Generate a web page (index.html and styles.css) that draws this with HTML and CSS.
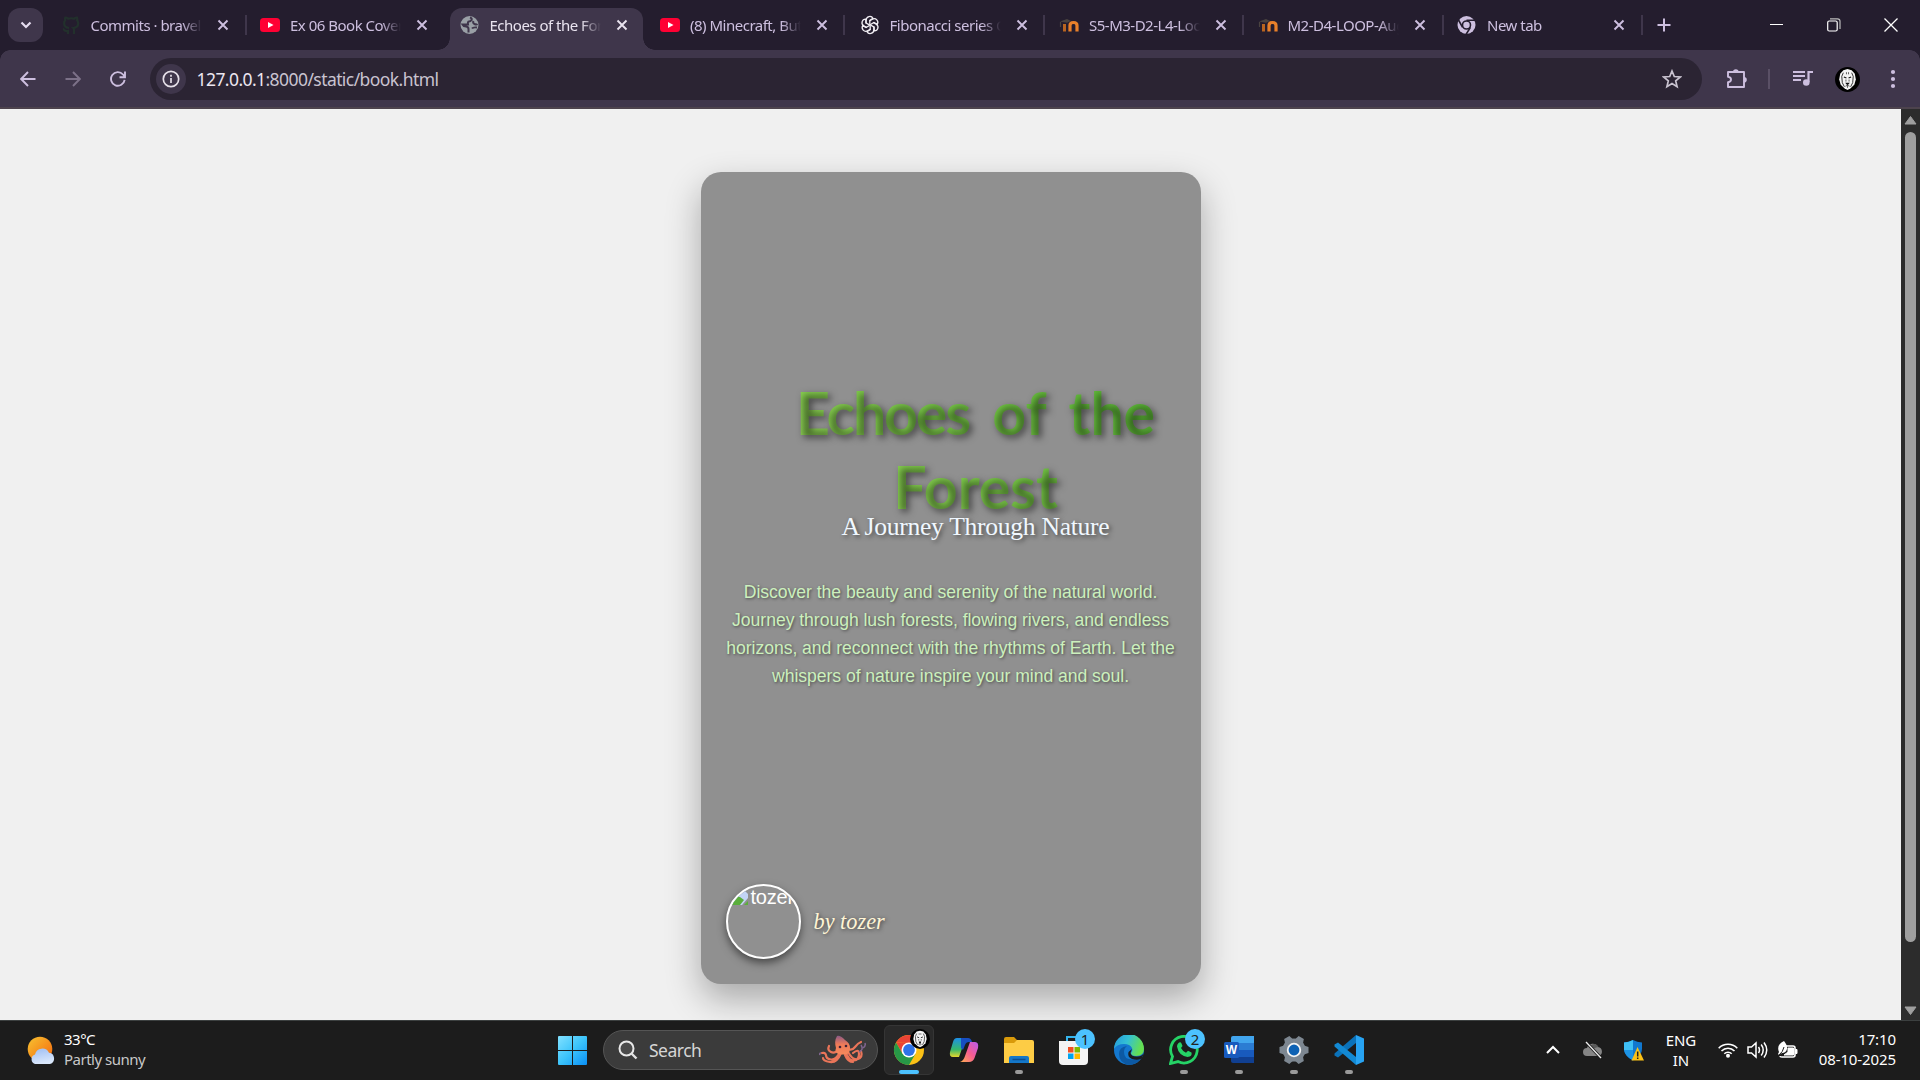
FILE: index.html
```html
<!DOCTYPE html>
<html lang="en">
<head>
<meta charset="utf-8">
<title>Echoes of the Forest</title>
<link rel="stylesheet" href="styles.css">
</head>
<body>
<svg class="defs" width="0" height="0">
  <defs>
    <symbol id="x" viewBox="0 0 12 12"><path d="M1.5 1.5l9 9M10.5 1.5l-9 9" fill="none" stroke="currentColor" stroke-width="1.9"/></symbol>
    <symbol id="yt" viewBox="0 0 20 14"><rect width="20" height="14" rx="3.5" fill="#ff0033"/><path d="M8 4l5.500 3L8 10z" fill="#fff"/></symbol>
    <symbol id="moodle" viewBox="0 0 20 14"><path d="M1 3.500L8 1l4 2-4 1.800z" fill="#4a4340"/><path d="M1.500 4v5" stroke="#4a4340" stroke-width="1.200"/><path d="M5.500 13.500V6" stroke="#b86420" stroke-width="3"/><path d="M11 13.500V7.500q0-3 3.500-3t3.500 3V13.500" fill="none" stroke="#e8802a" stroke-width="3.200"/></symbol>
    <symbol id="lion" viewBox="0 0 24 24"><circle cx="12" cy="12" r="12" fill="#000"/><path d="M12 2L8 3 5 6.500 4 12l1.500 5L9 20.500l3 1.500 3-1.500 3.500-3.500L20 12l-1-5.500L16 3z" fill="#f4f4f4"/><path d="M8 5.500L6.500 9l.5 6 2 4M16 5.500L17.500 9l-.5 6-2 4" fill="none" stroke="#111" stroke-width=".8"/><path d="M8.500 9.500l2.500 1M15.500 9.500l-2.500 1M10.800 15.500h2.400L12 17z" fill="#111" stroke="#111" stroke-width="1"/><path d="M11 5v2M13 5v2M10.500 12v2M13.500 12v2M10 18.500l2-1 2 1M12 17v3" fill="none" stroke="#444" stroke-width=".8"/></symbol>
  </defs>
</svg>
<div class="screen">
  <header class="tabstrip">
    <button class="tab-search"><svg width="12" height="12" viewBox="0 0 12 12"><path d="M1.500 3.500L6 8l4.500-4.500" fill="none" stroke="#e6ddf0" stroke-width="2.200"/></svg></button>
    <div class="tabs">
      <div class="tab"><svg class="fav" width="20" height="20" viewBox="0 0 20 20"><path d="M7 19v-3c-4 1-4-2-5-2M13 19v-4c0-1 0-1.500-.6-2 3-.4 4.800-2 4.800-4.800 0-1.300-.4-2.200-1.100-3 .3-1 .2-2-.1-2.700-1 0-2 .5-2.800 1.200a10 10 0 0 0-6 0C6.300 3 5.300 2.500 4.300 2.500c-.4.800-.4 1.800-.1 2.700-.8.800-1.100 1.700-1.100 3C3.100 11 5 12.600 8 13" fill="none" stroke="#22302c" stroke-width="2.200"/></svg><span class="label">Commits · bravel</span><svg class="close"><use href="#x"/></svg></div>
      <div class="tab no-sep"><svg class="fav yt"><use href="#yt"/></svg><span class="label">Ex 06 Book Cover</span><svg class="close"><use href="#x"/></svg></div>
      <div class="tab active"><svg class="fav" width="20" height="20" viewBox="0 0 20 20"><circle cx="9.500" cy="10" r="9" fill="#9aa0a6"/><path d="M10 2.500q2.500 1 1.500 2.500T9 6.500 8 9.500H2.500q1 2 3.500 2t2.500 2.500v3.500M13.500 6q-1 2 1 3t3 0M17 12.500q-4-.5-5 1" fill="none" stroke="#3f364b" stroke-width="2"/></svg><span class="label">Echoes of the For</span><svg class="close"><use href="#x"/></svg></div>
      <div class="tab"><svg class="fav yt"><use href="#yt"/></svg><span class="label">(8) Minecraft, But</span><svg class="close"><use href="#x"/></svg></div>
      <div class="tab"><svg class="fav" width="20" height="20" viewBox="-10 -10 20 20"><g fill="none" stroke="#f0edf3" stroke-width="1.300"><path id="p" d="M-3.800-1.500V-5a3.600 3.600 0 0 1 6.800-1.600L-.2-4.700v4.500"/><use href="#p" transform="rotate(60)"/><use href="#p" transform="rotate(120)"/><use href="#p" transform="rotate(180)"/><use href="#p" transform="rotate(240)"/><use href="#p" transform="rotate(300)"/></g></svg><span class="label">Fibonacci series C</span><svg class="close"><use href="#x"/></svg></div>
      <div class="tab"><svg class="fav yt"><use href="#moodle"/></svg><span class="label">S5-M3-D2-L4-Loo</span><svg class="close"><use href="#x"/></svg></div>
      <div class="tab"><svg class="fav yt"><use href="#moodle"/></svg><span class="label">M2-D4-LOOP-Aug</span><svg class="close"><use href="#x"/></svg></div>
      <div class="tab"><svg class="fav" width="20" height="20" viewBox="0 0 20 20"><circle cx="9.500" cy="10" r="9" fill="#cdbfdf"/><circle cx="9.500" cy="10" r="4" fill="#cdbfdf" stroke="#241d2e" stroke-width="1.600"/><path d="M9.500 5.300H18M5.600 12.300L1.500 5M13.400 12.300L9 19.500" stroke="#241d2e" stroke-width="1.600"/></svg><span class="label">New tab</span><svg class="close"><use href="#x"/></svg></div>
    </div>
    <svg class="plus" width="14" height="14" viewBox="0 0 14 14"><path d="M7 .5v13M.5 7h13" stroke="#cdbfdf" stroke-width="2"/></svg>
    <div class="window-buttons">
      <svg width="14" height="14" viewBox="0 0 14 14"><path d="M0 6.500h13" stroke="#fff"/></svg>
      <svg width="14" height="14" viewBox="0 0 14 14"><rect x=".7" y="3" width="9.500" height="10" rx="1.500" fill="none" stroke="#fff" stroke-width="1.200"/><path d="M3 .8h7.500q2.500 0 2.500 2.500V11" fill="none" stroke="#bbb" stroke-width="1.200"/></svg>
      <svg width="14" height="14" viewBox="0 0 14 14"><path d="M.5.500l13 13M13.500.500l-13 13" stroke="#fff" stroke-width="1.300"/></svg>
    </div>
  </header>
  <nav class="toolbar">
    <div class="nav-icons">
      <svg width="16" height="16" viewBox="0 0 16 16"><path d="M15.500 8H1.500M8 1L1.200 8 8 15" fill="none" stroke="#cdbfdf" stroke-width="1.900"/></svg>
      <svg width="16" height="16" viewBox="0 0 16 16"><path d="M.5 8h14M8 1l6.800 7L8 15" fill="none" stroke="#7c7188" stroke-width="1.900"/></svg>
      <svg width="16" height="16" viewBox="0 0 16 16"><path d="M14.600 8.800A6.800 6.800 0 1 1 13 3.500L14.800 5.500M15 .5v5.700H9.500" fill="none" stroke="#cdbfdf" stroke-width="1.900"/></svg>
    </div>
    <div class="omnibox">
      <span class="info"><svg width="18" height="18" viewBox="0 0 18 18"><circle cx="9" cy="9" r="7.700" fill="none" stroke="#e6e0e9" stroke-width="1.700"/><path d="M9 8v5M9 4.800v1.900" stroke="#e6e0e9" stroke-width="1.700"/></svg></span>
      <span class="url"><b>127.0.0.1</b>:8000/static/book.html</span>
      <svg class="star" width="20" height="20" viewBox="0 0 20 20"><path d="M10 2l2.300 5.500 6 .5-4.600 3.900 1.400 5.800L10 14.600l-5.100 3.100 1.400-5.800L1.700 8l6-.5z" fill="none" stroke="#c9c3d0" stroke-width="1.700"/></svg>
    </div>
    <div class="actions">
      <svg width="22" height="22" viewBox="0 0 22 22"><path d="M2 4h16v15H2v-4.700q3-.3 3-2.800T2 8.700z" fill="none" stroke="#cdbfdf" stroke-width="1.900" stroke-linejoin="round"/><path d="M7 4a2.800 2.800 0 0 1 5.600 0zM18 9a2.800 2.800 0 0 1 0 5.600z" fill="#cdbfdf"/></svg>
      <i></i>
      <svg width="20" height="18" viewBox="0 0 20 18"><path d="M0 2h12M0 6h12M0 10h8" stroke="#cdbfdf" stroke-width="2"/><path d="M15.500 12V2H20" fill="none" stroke="#cdbfdf" stroke-width="2.200"/><circle cx="13.300" cy="12.500" r="3.300" fill="#cdbfdf"/></svg>
      <svg width="25" height="25"><use href="#lion"/></svg>
      <svg width="6" height="20" viewBox="0 0 6 20" fill="#cdbfdf"><circle cx="3" cy="3" r="2.100"/><circle cx="3" cy="10" r="2.100"/><circle cx="3" cy="17" r="2.100"/></svg>
    </div>
  </nav>
  <div class="viewport">
    <main class="page">
      <article class="cover">
        <div class="heading">
          <h1><span class="tight">Echoes</span> of the Forest</h1>
          <h2>A Journey Through Nature</h2>
        </div>
        <p class="blurb">Discover the beauty and serenity of the natural world. Journey through lush forests, flowing rivers, and endless horizons, and reconnect with the rhythms of Earth. Let the whispers of nature inspire your mind and soul.</p>
        <footer class="author">
          <span class="portrait"><svg width="20" height="20" viewBox="0 0 20 20"><path d="M2 2h12l5 5v4l-6 7H2z" fill="#c3d4f5"/><path d="M2 18v-3q4-7 9-5l4 3-4 5zM15 18l4-4v4z" fill="#5aae3c"/></svg>tozer</span>
          <em>by tozer</em>
        </footer>
      </article>
    </main>
    <aside class="scrollbar">
      <svg width="13" height="10" viewBox="0 0 13 10"><path d="M6.500 1.500L12 9H1z" fill="#9f9f9f" stroke="#9f9f9f" stroke-linejoin="round"/></svg>
      <span></span>
      <svg width="13" height="10" viewBox="0 0 13 10"><path d="M6.500 8.500L12 1H1z" fill="#9f9f9f" stroke="#9f9f9f" stroke-linejoin="round"/></svg>
    </aside>
  </div>
  <footer class="taskbar">
    <div class="weather">
      <svg width="30" height="30" viewBox="0 0 30 30"><defs><linearGradient id="sun" x1="0" y1="0" x2="1" y2="1"><stop offset="0" stop-color="#f7c331"/><stop offset="1" stop-color="#f4660c"/></linearGradient><linearGradient id="cl" x1="0" y1="0" x2=".3" y2="1"><stop offset="0" stop-color="#9dbdf2"/><stop offset="1" stop-color="#d9e7fb"/></linearGradient></defs><circle cx="13" cy="13" r="12.300" fill="url(#sun)"/><path d="M8 28a5 5 0 0 1 0-9.500 7.500 7.500 0 0 1 14-1.800A5.800 5.800 0 0 1 23 28z" fill="url(#cl)"/></svg>
      <div><strong>33°C</strong><span>Partly sunny</span></div>
    </div>
    <div class="dock">
      <svg class="start" width="29" height="29" viewBox="0 0 29 29"><defs><linearGradient id="win" x1="0" y1="0" x2="1" y2="1"><stop offset="0" stop-color="#82e1ff"/><stop offset=".5" stop-color="#3cc4fb"/><stop offset="1" stop-color="#0a8ff5"/></linearGradient></defs><path d="M0 1q0-1 1-1h13v14H0zM15 0h13q1 0 1 1v13H15zM0 15h14v14H1q-1 0-1-1zM15 15h14v13q0 1-1 1H15z" fill="url(#win)"/></svg>
      <div class="search">
        <svg width="20" height="20" viewBox="0 0 20 20"><circle cx="8.500" cy="8.500" r="7" fill="#4b4b4b" stroke="#e8e8e8" stroke-width="2"/><path d="M13.500 13.500l5 5" stroke="#e0e0e0" stroke-width="2.400"/></svg>
        <span>Search</span>
        <svg width="48" height="30" viewBox="0 0 48 30"><defs><linearGradient id="oct" x1="0" y1="0" x2="0" y2="1"><stop offset="0" stop-color="#8a5a86"/><stop offset=".45" stop-color="#ee7a58"/><stop offset="1" stop-color="#f58a5c"/></linearGradient></defs><g fill="none" stroke-linecap="round" stroke="#ea7559" stroke-width="2.200"><path d="M21 17q-4 8-9 7.500T7 20q-1-3-4-2M22 18q-4 10-11 9t-7-4M20 14q-4 5-8 3t-2-6M27 18q3 8 8 7.500t5-6.500-6-1M29 17q5 9 10 7t3-8M26 20q3 7 8 7M29 14q4 2 7-2t6-5"/></g><path d="M40 17q5-2 2-7M44 13q3-2 2-5M2 18q-2 0-1 2" fill="none" stroke="#80658f" stroke-width="1.500"/><path d="M18 1q3-1 8 4 5 3 5 8t-3 6-8 0-3-6q-2-7 1-12z" fill="url(#oct)"/><circle cx="21" cy="12" r="1.300" fill="#412338"/><circle cx="27" cy="11" r="1.300" fill="#412338"/></svg>
      </div>
      <div class="app current"><svg width="32" height="32" viewBox="-16 -16 32 32"><circle r="15" fill="#fbc116"/><path d="M-13-7.500A15 15 0 0 1 13-7.500L0-7z" fill="#ea4335"/><path d="M-13-7.500L0-7-6.500 3.800z" fill="#ea4335"/><path d="M-13-7.500A15 15 0 0 0 0 15L6.500 3.800-6.500 3.800z" fill="#279847"/><circle r="7.500" fill="#fff"/><circle r="5.900" fill="#2f73e8"/></svg><svg class="mini"><use href="#lion"/></svg></div>
      <div class="app"><svg width="30" height="30" viewBox="0 0 30 30"><defs><linearGradient id="c1" x1="0" y1="0" x2="0" y2="1"><stop offset="0" stop-color="#1d8fe8"/><stop offset=".6" stop-color="#35b86c"/><stop offset="1" stop-color="#e5d72c"/></linearGradient><linearGradient id="c2" x1="1" y1="0" x2="0" y2="1"><stop offset="0" stop-color="#b85cf0"/><stop offset=".5" stop-color="#f75c91"/><stop offset="1" stop-color="#ffaf4f"/></linearGradient></defs><path d="M11 27h9q4 0 5.500-4L29 13q1-6-3-6h-5l-5 14q-1.500 5-5 6z" fill="url(#c2)"/><path d="M19 3H8Q5 3 4 7L1 17q-1 5 3 5h6l5-14q1-4 4-5z" fill="url(#c1)"/><path d="M12 3h7q3 0 4 4h-3q-3 0-4 3l-2 5-2-2z" fill="#174ec1"/></svg></div>
      <div class="app open"><svg width="30" height="30" viewBox="0 0 30 30"><path d="M0 4q0-2 2-2h8l3 3h14v5H0z" fill="#d99a0a"/><path d="M0 8h10l3-3h15q2 0 2 2v21H0z" fill="#fdcc45"/><path d="M5 28v-5q0-2 2-2h16q2 0 2 2v5z" fill="#1477c8"/><path d="M8.500 24.500h13" stroke="#0a4d91" stroke-width="1.500"/></svg></div>
      <div class="app"><svg width="30" height="30" viewBox="0 0 30 30"><path d="M8 7V2h10" fill="none" stroke="#35b5ed" stroke-width="2"/><path d="M0 6h29v20q0 4-4 4H4q-4 0-4-4z" fill="#f4f4f4"/><path d="M9 12h5.500v5.500H9z" fill="#f25022"/><path d="M15.500 12H21v5.500h-5.500z" fill="#7fba00"/><path d="M9 18.500h5.500V24H9z" fill="#00a4ef"/><path d="M15.500 18.500H21V24h-5.500z" fill="#ffb900"/></svg><b class="badge">1</b></div>
      <div class="app"><svg width="30" height="30" viewBox="0 0 30 30"><defs><linearGradient id="e1" x1="0" y1="0" x2="1" y2=".3"><stop offset="0" stop-color="#2396dd"/><stop offset=".5" stop-color="#34c1d4"/><stop offset="1" stop-color="#65df50"/></linearGradient></defs><circle cx="15" cy="15" r="15" fill="#1478cf"/><path d="M0 14A15 15 0 0 1 30 14q0 7-8 7-5 0-5-3 2-2 1-5-2-4-8-4Q3 9 0 14z" fill="url(#e1)"/><path d="M10 17q0 11 17 6-4 7-12 7Q5 28 5 19q0-7 8-8-3 2-3 6z" fill="#0c59a4"/><path d="M18 14q-1 2-1.500 4 1 4 7 3.500 4 0 6-3l-1.500 5q-4 2-10 .5-5-2-3.500-7z" fill="#1c1c1c"/></svg></div>
      <div class="app open"><svg width="30" height="30" viewBox="0 0 30 30"><path d="M1.500 28.500l2-7A13.300 13.300 0 1 1 9 26.600z" fill="none" stroke="#25d366" stroke-width="2.800"/><path d="M9.500 8q2-1.500 3 .5l1 2.500-1.500 2q1.500 3 5 4.700l2-2 3.500 1.800q1 4-4 4.500-9-1.500-10.500-10.500-.1-2 1.500-3.500z" fill="#25d366"/></svg><b class="badge">2</b></div>
      <div class="app open"><svg width="30" height="30" viewBox="0 0 30 30"><path d="M7 3q0-2 2-2h21v8H7z" fill="#41a5ee"/><path d="M7 8h23v7H7z" fill="#2b7cd3"/><path d="M7 15h23v7H7z" fill="#185abd"/><path d="M7 22h23v6H9q-2 0-2-2z" fill="#103f91"/><rect y="7" width="15" height="16" rx="1.500" fill="#185abd"/><text x="7.500" y="19" text-anchor="middle" class="word">W</text></svg></div>
      <div class="app open"><svg width="30" height="30" viewBox="-15 -15 30 30"><g fill="#7d8791"><circle r="11.500"/><path d="M14.500-3v6l-6 2V-5z"/><path d="M14.500-3v6l-6 2V-5z" transform="rotate(60)"/><path d="M14.500-3v6l-6 2V-5z" transform="rotate(120)"/><path d="M14.500-3v6l-6 2V-5z" transform="rotate(180)"/><path d="M14.500-3v6l-6 2V-5z" transform="rotate(240)"/><path d="M14.500-3v6l-6 2V-5z" transform="rotate(300)"/></g><circle r="6.300" fill="#0e62b4" stroke="#f3f3f3" stroke-width="1.800"/></svg></div>
      <div class="app open"><svg width="30" height="30" viewBox="0 0 30 30"><path d="M22 0l8 3.500v23L22 30z" fill="#27a3f2"/><path d="M22 0v8L4 22.500.5 20.500V18.500z" fill="#0b72b9"/><path d="M22 30v-8L4 7.500.5 9.500v2z" fill="#1389d3"/></svg></div>
    </div>
    <div class="tray">
      <svg width="14" height="10" viewBox="0 0 14 10"><path d="M1 8l6-6 6 6" fill="none" stroke="#fff" stroke-width="2"/></svg>
      <svg width="20" height="18" viewBox="0 0 20 18"><path d="M4 15a4 4 0 0 1 0-8 6 6 0 0 1 11-1 4.700 4.700 0 0 1 1 9z" fill="#858585"/><path d="M7 5a5 5 0 0 1 8.500 1q-5 1-6 3z" fill="#5a5a5a"/><path d="M3 1l15 16" stroke="#1c1c1c" stroke-width="3"/><path d="M3 1l15 16" stroke="#eee" stroke-width="1.300"/></svg>
      <svg width="20" height="21" viewBox="0 0 20 21"><path d="M9 0q4 2 9 2.500V9q0 7-9 11.500Q0 16 0 9V2.500Q5 2 9 0z" fill="#1178cf"/><path d="M9 0v10H0V2.500Q5 2 9 0z" fill="#3fc0f5"/><path d="M9 10v10.500Q1 16 0 10z" fill="#1d93e4"/><path d="M13.500 7L20 20.500H7.500z" fill="#fbc115"/><path d="M13.700 11.500v5M13.700 17.500v1.500" stroke="#222" stroke-width="1.500"/></svg>
      <div class="lang">ENG<br>IN</div>
      <svg width="20" height="16" viewBox="0 0 20 16"><g fill="none" stroke="#fff" stroke-width="1.600"><path d="M.7 6.200a13 13 0 0 1 18.600 0M3.500 9a9 9 0 0 1 13 0M6.300 11.800a5.200 5.200 0 0 1 7.400 0"/></g><circle cx="10" cy="13.700" r="2" fill="#fff"/></svg>
      <svg width="21" height="18" viewBox="0 0 21 18"><g fill="none" stroke="#fff" stroke-width="1.500"><path d="M1 6h3.500L9 2v14l-4.500-4H1zM11.500 6q2 3 0 6M14.200 3.500q4 5.500 0 11M17 1.500q5.500 7.500 0 15"/></g></svg>
      <svg width="21" height="18" viewBox="0 0 21 18"><path d="M9 5h7q2 0 2 2v7q0 2-2 2H5q-2 0-2-1" fill="none" stroke="#fff" stroke-width="1.600"/><path d="M11 7h5.500v7H7l4-3zM18.500 8.500h1.500v4h-1.500z" fill="#fff" stroke="#fff"/><path d="M7 0q4 5 3 8-1 4-5 4l-3 2-1-1 1-2Q-1 4 7 0z" fill="#fff"/><path d="M2 14q4-3 5-8" fill="none" stroke="#1c1c1c"/></svg>
      <div class="clock">17:10<br>08-10-2025</div>
    </div>
  </footer>
</div>
</body>
</html>
```
FILE: styles.css
```css
* { box-sizing: border-box; }
body { margin: 0; overflow: hidden; background: #241d2e; font-family: "Noto Sans", "Open Sans", sans-serif; }
svg { display: block; flex: none; }
.defs { display: none; }
.screen { width: 1920px; height: 1080px; display: flex; flex-direction: column; }

.tabstrip { height: 50px; display: flex; align-items: center; padding-left: 8px; background: #241d2e; }
.tab-search { width: 35px; height: 34px; border: 0; border-radius: 12px; background: #3f364b; padding: 0; display: grid; place-items: center; }
.tabs { display: flex; align-self: stretch; margin-left: 4px; }
.tab { position: relative; width: 199.5px; display: flex; align-items: center; padding-left: 13.5px; color: #cdbfdf; }
.tab::after { content: ""; position: absolute; right: 0; top: 15px; width: 2px; height: 20px; background: #3f364b; }
.tab.no-sep::after { display: none; }
.tab.active { color: #e9e3ef; z-index: 1; }
.tab.active::before { content: ""; position: absolute; z-index: -1; left: 4px; right: 3px; top: 8px; bottom: 0; border-radius: 12px 12px 0 0; background: #3f364b; }
.tab.active::after { z-index: -1; left: -8px; right: -9px; width: auto; top: auto; bottom: 0; height: 12px; background: radial-gradient(circle at 0 0, transparent 11.5px, #3f364b 12px) left / 12px 12px no-repeat, radial-gradient(circle at 100% 0, transparent 11.5px, #3f364b 12px) right / 12px 12px no-repeat; }
.tab:nth-child(n+4):nth-child(-n+6) { padding-left: 14.5px; }
.fav { width: 20px; height: 20px; }
.fav.yt { height: 14px; }
.label { width: 111px; margin-left: 10px; overflow: hidden; white-space: nowrap; font-size: 15px; letter-spacing: -.5px; line-height: 24px; -webkit-mask: linear-gradient(90deg, #000 82%, transparent); mask: linear-gradient(90deg, #000 82%, transparent); }
.close { width: 12px; height: 12px; margin-left: 15px; }
.plus { margin-left: 14px; }
.window-buttons { margin: 0 22px 0 auto; display: flex; gap: 43px; }

.toolbar { height: 59px; display: flex; align-items: center; padding: 1px 20px 0; background: radial-gradient(circle at 10px 10px, #3f364b 9.5px, #241d2e 10px) 0 0 / 10px 10px no-repeat, radial-gradient(circle at 0 10px, #3f364b 9.5px, #241d2e 10px) 100% 0 / 10px 10px no-repeat, #3f364b; border-bottom: 2px solid #4d434d; }
.nav-icons { display: flex; gap: 29px; width: 130px; }
.omnibox { width: 1552px; height: 42px; border-radius: 21px; background: #2b2433; display: flex; align-items: center; padding: 0 20px 0 6px; }
.info { width: 30px; height: 30px; border-radius: 50%; background: #3f364b; display: grid; place-items: center; }
.url { flex: 1; margin-left: 10.5px; font-size: 17.5px; letter-spacing: -.57px; color: #c9c3d0; }
.url b { font-weight: 400; color: #ece6f0; }
.actions { display: flex; align-items: center; flex: 1; padding-left: 24px; }
.actions i { width: 2px; height: 20px; margin: 0 23px 0 20px; background: #5a5066; }
.actions svg:nth-of-type(3) { margin-left: 22px; }
.actions svg:nth-of-type(4) { margin-left: 30px; }

.viewport { flex: 1; display: flex; min-height: 0; background: #f0f0f0; }
.page { flex: 1; padding-top: 63px; overflow: hidden; }
.cover { width: 500px; height: 812px; margin: 0 auto; padding: 0 25px 25px; display: flex; flex-direction: column; border-radius: 20px; background: #909090; box-shadow: 0 15px 35px rgba(0, 0, 0, .3); color: #fff; }
.heading { margin: 204px -25px 0 25px; text-align: center; }
h1 { margin: 0 0 -11px; font: 700 59px/73.5px Lato, sans-serif; letter-spacing: -.1px; word-spacing: 9px; color: transparent; background: linear-gradient(45deg, #9fdb5e, #50b030); -webkit-background-clip: text; background-clip: text; text-shadow: 3px 3px 7px rgba(0, 0, 0, .5); }
h1 .tight { letter-spacing: -2.100px; }
h2 { margin: 0; font: 400 25.6px/30px "Liberation Serif", serif; letter-spacing: -.28px; color: #f0f8ff; text-shadow: 2px 2px 4px rgba(0, 0, 0, .5); }
.blurb { margin: 36px -5px 0; font: 17.6px/28px "Liberation Sans", sans-serif; letter-spacing: -.04px; text-align: center; color: #ccf0bd; text-shadow: 1px 1px 3px rgba(0, 0, 0, .5); }
.author { margin-top: auto; display: flex; align-items: center; gap: 13px; }
.portrait { width: 75px; height: 75px; border: 2px solid #fff; border-radius: 50%; overflow: hidden; display: flex; gap: 2px; padding: 1px 0 0 1px; font: 20px/20px "Liberation Sans", sans-serif; letter-spacing: -.2px; box-shadow: 0 4px 8px rgba(0, 0, 0, .5); }
.author em { font: italic 22.3px "Liberation Serif", serif; color: #fff5d5; text-shadow: 1px 1px 4px rgba(0, 0, 0, .6); }

.scrollbar { width: 19px; background: #2c2c2c; display: flex; flex-direction: column; align-items: center; padding: 6px 0 4px; }
.scrollbar span { width: 11px; height: 810px; margin: 7px 0 auto; border-radius: 6px; background: #9f9f9f; }

.taskbar { height: 60px; display: grid; grid-template-columns: 558px 1fr 375px; background: #1c1c1c; border-top: 1px solid #3c4040; color: #fff; font-size: 15px; line-height: 20px; }
.weather { display: flex; align-items: center; gap: 7px; padding-left: 27px; letter-spacing: -.5px; }
.weather div { padding-bottom: 4px; }
.weather strong, .weather span { display: block; font-weight: 400; }
.weather span { color: #c8c8c8; }
.dock { display: flex; align-items: center; padding-bottom: 1px; }
.search { width: 275px; height: 40px; margin: 0 6px 0 16px; border: 1px solid #555; border-radius: 20px; background: #3b3b3b; display: flex; align-items: center; padding: 0 10px 0 14px; }
.search span { flex: 1; margin-left: 11px; font-size: 17.5px; letter-spacing: -.5px; color: #d5d5d5; }
.app { position: relative; width: 50px; height: 50px; margin-right: 5px; display: grid; place-items: center; }
.current { border: 1px solid #353535; border-radius: 6px; background: #292929; }
.app.open::after, .current::after { content: ""; position: absolute; left: 21px; bottom: 1px; width: 8px; height: 4px; border-radius: 2px; background: #9a9a9a; }
.current::after { left: 14px; bottom: 0; width: 20px; background: #4cc2ff; }
.mini { position: absolute; top: 3px; right: 3px; width: 20px; height: 20px; }
.badge { position: absolute; top: 4px; right: 4px; width: 20px; height: 20px; border-radius: 50%; background: #4cc2ff; color: #222; font-weight: 400; text-align: center; }
.word { font: bold 12px "Liberation Sans", sans-serif; fill: #fff; }
.tray { display: flex; align-items: center; justify-content: flex-end; padding-right: 24px; padding-bottom: 1px; letter-spacing: -.1px; }
.tray svg:nth-of-type(2) { margin: 0 21px 0 23px; }
.lang { width: 44px; margin: 0 15px 0 15px; padding-bottom: 1px; text-align: center; }
.tray svg:nth-of-type(n+5) { margin-left: 9px; }
.clock { width: 98px; padding-bottom: 3px; text-align: right; }
```
